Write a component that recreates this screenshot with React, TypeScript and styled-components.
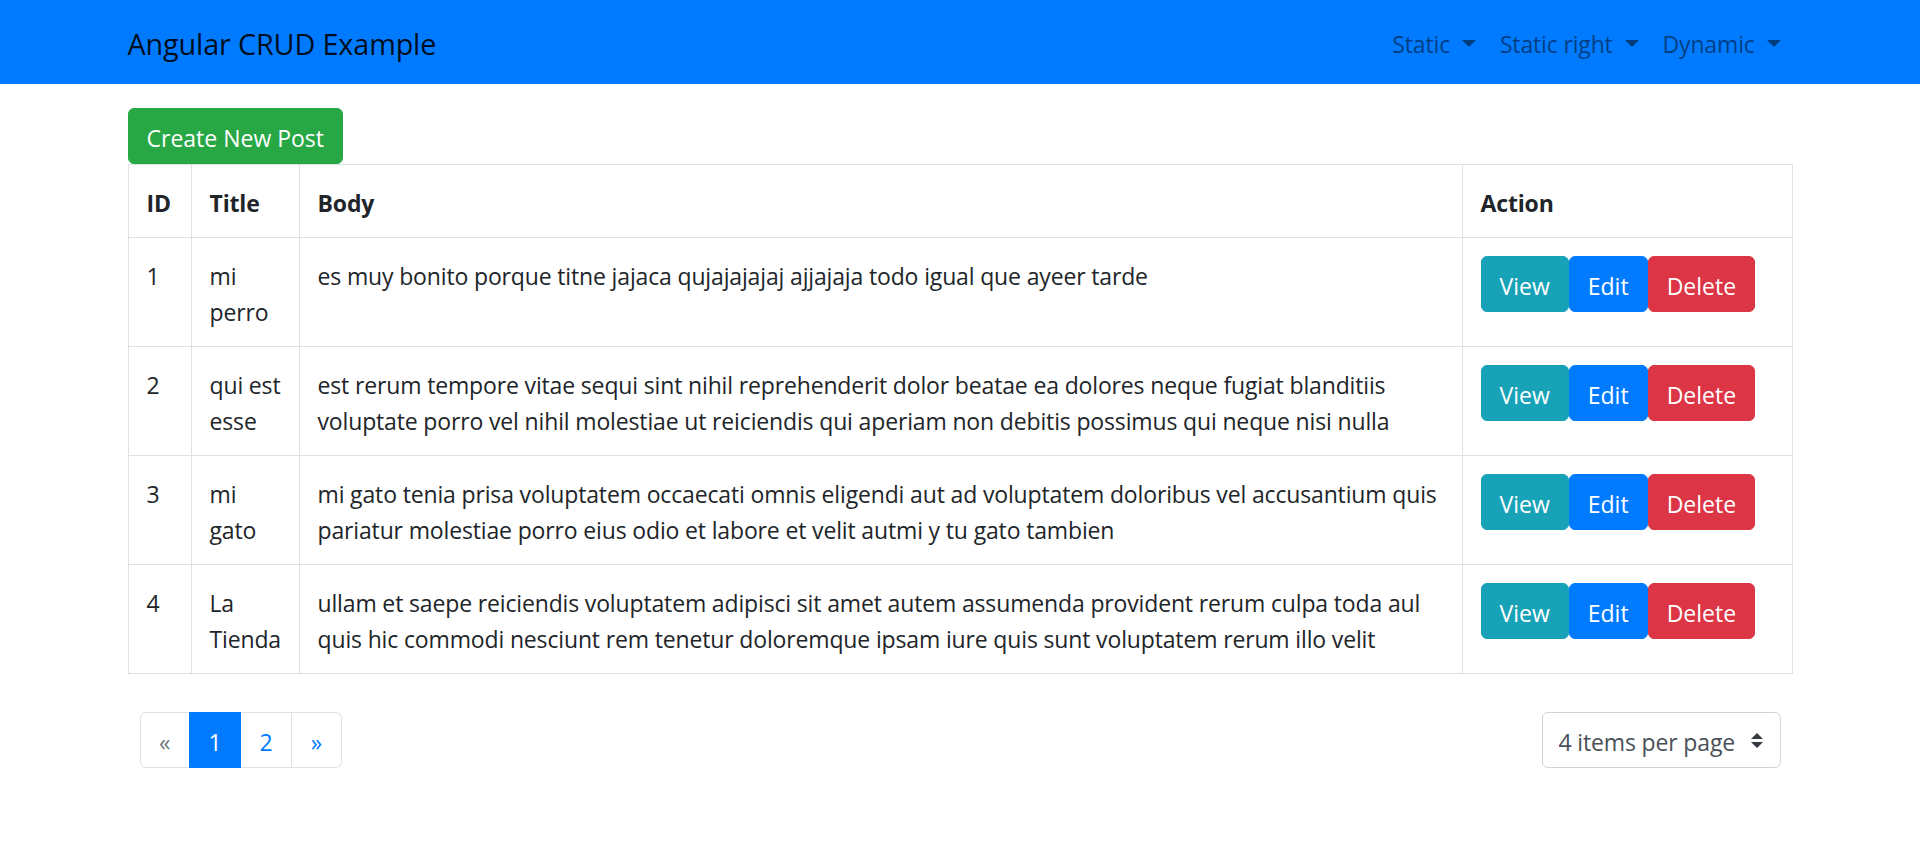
import React from "react";
import styled, { createGlobalStyle } from "styled-components";

const FONT = `"Open Sans", "Noto Sans", "Liberation Sans", sans-serif`;

const GlobalStyle = createGlobalStyle`
  html, body { margin: 0; padding: 0; background: #fff; }
  body {
    font-family: ${FONT};
    font-size: 23px;
    line-height: 36px;
    letter-spacing: -0.15px;
    color: #212529;
  }
  * { box-sizing: border-box; }
`;

const Navbar = styled.nav`
  background: #007bff;
  padding: 12px 0;
`;

const Container = styled.div`
  max-width: 1710px;
  margin: 0 auto;
  padding: 0 22.5px;
`;

const NavInner = styled(Container)`
  display: flex;
  align-items: center;
  justify-content: space-between;
`;

const Brand = styled.a`
  font-size: 28.8px;
  line-height: 45px;
  padding: 9px 0 6px;
  color: rgba(0, 0, 0, 0.9);
  text-decoration: none;
  white-space: nowrap;
`;

const NavList = styled.ul`
  display: flex;
  list-style: none;
  margin: 0;
  padding: 0;
`;

const NavLink = styled.a`
  display: block;
  padding: 14px 12px 10px;
  font-size: 23px;
  line-height: 36px;
  color: rgba(0, 0, 0, 0.5);
  text-decoration: none;
  white-space: nowrap;
`;

const Caret = styled.span`
  display: inline-block;
  margin-left: 6px;
  vertical-align: 6px;
  width: 0;
  height: 0;
  border-top: 7.2px solid currentColor;
  border-left: 7.2px solid transparent;
  border-right: 7.2px solid transparent;
`;

const Main = styled(Container)`
  padding-top: 24px;
`;

const Button = styled.button<{ $bg: string }>`
  display: inline-block;
  font-family: ${FONT};
  font-size: 23px;
  line-height: 36px;
  letter-spacing: 0;
  padding: 11px 18px 7px;
  border: 1px solid ${(p) => p.$bg};
  background: ${(p) => p.$bg};
  color: #fff;
  border-radius: 6px;
  cursor: pointer;
  white-space: nowrap;
`;

const Table = styled.table`
  width: 100%;
  border-collapse: collapse;
  table-layout: fixed;
  margin-bottom: 24px;
  border: 1px solid #dee2e6;
`;

const Th = styled.th`
  text-align: left;
  font-weight: 700;
  padding: 20px 18px 16px;
  border: 1px solid #dee2e6;
  vertical-align: top;
  line-height: 36px;
  white-space: nowrap;
`;

const Td = styled.td`
  padding: 20px 18px 16px;
  border: 1px solid #dee2e6;
  vertical-align: top;
  line-height: 36px;
`;

const ActionTd = styled(Td)`
  padding: 18px;
`;

const Line = styled.span`
  display: block;
  white-space: nowrap;
`;

const Actions = styled.div`
  display: flex;
`;

const Footer = styled.div`
  display: flex;
  justify-content: space-between;
  align-items: center;
  padding: 14px 12px;
`;

const Pagination = styled.ul`
  display: flex;
  list-style: none;
  margin: 0;
  padding: 0;
`;

const PageLink = styled.a<{ $active?: boolean; $disabled?: boolean; $first?: boolean; $last?: boolean }>`
  display: block;
  padding: 14px 18.5px 10px;
  margin-left: ${(p) => (p.$first ? "0" : "-1px")};
  font-size: 23px;
  line-height: 30px;
  letter-spacing: 0;
  text-decoration: none;
  border: 1px solid ${(p) => (p.$active ? "#007bff" : "#dee2e6")};
  background: ${(p) => (p.$active ? "#007bff" : "#fff")};
  color: ${(p) => (p.$active ? "#fff" : p.$disabled ? "#6c757d" : "#007bff")};
  border-radius: ${(p) => (p.$first ? "6px 0 0 6px" : p.$last ? "0 6px 6px 0" : "0")};
  position: relative;
  z-index: ${(p) => (p.$active ? 1 : 0)};
`;

const SelectWrap = styled.div`
  position: relative;
  display: inline-block;
`;

const Select = styled.select`
  appearance: none;
  -webkit-appearance: none;
  width: 239px;
  height: 56px;
  padding: 11px 42px 7px 16px;
  font-family: ${FONT};
  font-size: 23px;
  line-height: 36px;
  letter-spacing: -0.15px;
  color: #495057;
  background: #fff;
  border: 1px solid #ced4da;
  border-radius: 6px;
`;

const SelectArrow = styled.svg`
  position: absolute;
  right: 18px;
  top: 50%;
  width: 12px;
  height: 15px;
  margin-top: -7.5px;
  pointer-events: none;
`;

type Post = { id: number; title: string[]; body: string[] };

const posts: Post[] = [
  {
    id: 1,
    title: ["mi", "perro"],
    body: ["es muy bonito porque titne jajaca qujajajajaj ajjajaja todo igual que ayeer tarde"],
  },
  {
    id: 2,
    title: ["qui est", "esse"],
    body: [
      "est rerum tempore vitae sequi sint nihil reprehenderit dolor beatae ea dolores neque fugiat blanditiis",
      "voluptate porro vel nihil molestiae ut reiciendis qui aperiam non debitis possimus qui neque nisi nulla",
    ],
  },
  {
    id: 3,
    title: ["mi", "gato"],
    body: [
      "mi gato tenia prisa voluptatem occaecati omnis eligendi aut ad voluptatem doloribus vel accusantium quis",
      "pariatur molestiae porro eius odio et labore et velit autmi y tu gato tambien",
    ],
  },
  {
    id: 4,
    title: ["La", "Tienda"],
    body: [
      "ullam et saepe reiciendis voluptatem adipisci sit amet autem assumenda provident rerum culpa toda aul",
      "quis hic commodi nesciunt rem tenetur doloremque ipsam iure quis sunt voluptatem rerum illo velit",
    ],
  },
];

export default function App() {
  return (
    <>
      <GlobalStyle />
      <Navbar>
        <NavInner>
          <Brand href="#">Angular CRUD Example</Brand>
          <NavList>
            {["Static", "Static right", "Dynamic"].map((l) => (
              <li key={l}>
                <NavLink href="#">
                  {l}{" "}
                  <Caret />
                </NavLink>
              </li>
            ))}
          </NavList>
        </NavInner>
      </Navbar>
      <Main>
        <Button $bg="#28a745">Create New Post</Button>
        <Table>
          <colgroup>
            <col style={{ width: 63 }} />
            <col style={{ width: 108 }} />
            <col />
            <col style={{ width: 330 }} />
          </colgroup>
          <thead>
            <tr>
              <Th>ID</Th>
              <Th>Title</Th>
              <Th>Body</Th>
              <Th>Action</Th>
            </tr>
          </thead>
          <tbody>
            {posts.map((p) => (
              <tr key={p.id}>
                <Td>{p.id}</Td>
                <Td>
                  {p.title.map((t) => (
                    <Line key={t}>{t}</Line>
                  ))}
                </Td>
                <Td>
                  {p.body.map((b) => (
                    <Line key={b}>{b}</Line>
                  ))}
                </Td>
                <ActionTd>
                  <Actions>
                    <Button $bg="#17a2b8">View</Button>
                    <Button $bg="#007bff">Edit</Button>
                    <Button $bg="#dc3545">Delete</Button>
                  </Actions>
                </ActionTd>
              </tr>
            ))}
          </tbody>
        </Table>
        <Footer>
          <Pagination>
            <li>
              <PageLink $first $disabled>«</PageLink>
            </li>
            <li>
              <PageLink $active href="#">1</PageLink>
            </li>
            <li>
              <PageLink href="#">2</PageLink>
            </li>
            <li>
              <PageLink $last href="#">»</PageLink>
            </li>
          </Pagination>
          <SelectWrap>
            <Select defaultValue="4">
              <option value="2">2 items per page</option>
              <option value="4">4 items per page</option>
              <option value="6">6 items per page</option>
            </Select>
            <SelectArrow viewBox="0 0 4 5">
              <path d="M2 0L0 2h4zm0 5L0 3h4z" fill="#343a40" />
            </SelectArrow>
          </SelectWrap>
        </Footer>
      </Main>
    </>
  );
}
